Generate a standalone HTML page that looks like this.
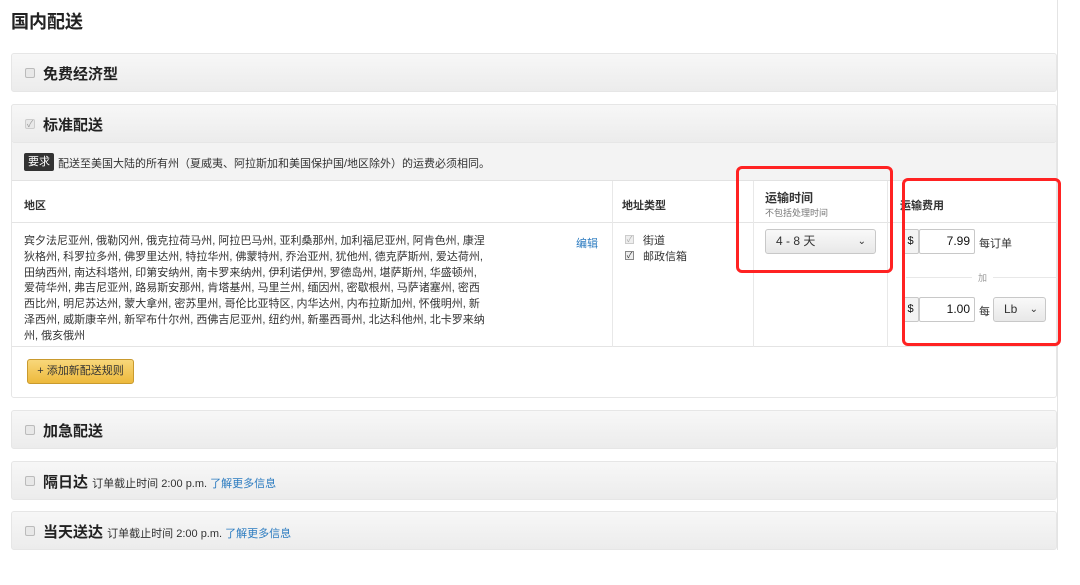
<!DOCTYPE html>
<html><head><meta charset="utf-8"><style>
*{box-sizing:border-box;margin:0;padding:0}
body{width:1080px;height:585px;background:#fff;font-family:"Liberation Sans","Noto Sans CJK SC",sans-serif;color:#111;position:relative;overflow:hidden}
.a{position:absolute}
.ph{position:absolute;left:11px;width:1046px;height:39px;background:linear-gradient(#f7f7f7,#ececec);border:1px solid #e6e6e6;border-radius:3px}
.ph .t{position:absolute;left:31px;top:9px;font-size:15px;font-weight:bold;color:#222}
.cb{position:absolute;left:13px;top:14px;width:10px;height:10px;border:1px solid #bbb;border-radius:2px;background:#e8e8e8}
.sm{font-size:11px;color:#333;font-weight:normal}
.lnk{color:#2b7bc0}
.sel{position:absolute;background:linear-gradient(#f9f9f9,#e8e8e8);border:1px solid #c8c8c8;border-radius:3px;font-size:12px;color:#333}
.inp{position:absolute;border:1px solid #c8c8c8;background:#fff;font-size:12px;border-radius:2px}
.red{position:absolute;border:3px solid #f22;border-radius:6px}
</style></head><body>
<div class="a" style="left:11px;top:8px;font-size:18px;font-weight:bold;color:#222">国内配送</div>
<div class="a" style="left:1057px;top:0;width:1px;height:550px;background:#e4e4e4"></div>

<div class="ph" style="top:53px"><div class="cb"></div><div class="t">免费经济型</div></div>

<div class="a" style="left:11px;top:104px;width:1046px;height:294px;border:1px solid #e6e6e6;border-radius:3px"></div>
<div class="ph" style="top:104px"><div class="cb" style="border-color:#ccc;font-size:9px;line-height:8px;color:#999;text-align:center">✓</div><div class="t">标准配送</div></div>
<div class="a" style="left:12px;top:143px;width:1044px;height:38px;background:#f3f3f3;border-bottom:1px solid #e2e2e2"></div>
<div class="a" style="left:24px;top:153px;width:30px;height:18px;background:#333;color:#fff;font-size:11px;line-height:18px;text-align:center;border-radius:2px">要求</div>
<div class="a" style="left:58px;top:155px;font-size:11px;color:#333">配送至美国大陆的所有州（夏威夷、阿拉斯加和美国保护国/地区除外）的运费必须相同。</div>

<div class="a" style="left:12px;top:222px;width:1044px;height:1px;background:#e4e4e4"></div>
<div class="a" style="left:12px;top:346px;width:1044px;height:1px;background:#e4e4e4"></div>
<div class="a" style="left:612px;top:181px;width:1px;height:166px;background:#e8e8e8"></div>
<div class="a" style="left:753px;top:181px;width:1px;height:166px;background:#e8e8e8"></div>
<div class="a" style="left:887px;top:181px;width:1px;height:166px;background:#e8e8e8"></div>

<div class="a" style="left:24px;top:197px;font-size:11px;font-weight:bold;color:#333">地区</div>
<div class="a" style="left:622px;top:197px;font-size:11px;font-weight:bold;color:#333">地址类型</div>
<div class="a" style="left:765px;top:189px;font-size:12px;font-weight:bold;color:#333">运输时间</div>
<div class="a" style="left:765px;top:206px;font-size:9px;color:#777">不包括处理时间</div>
<div class="a" style="left:900px;top:197px;font-size:11px;font-weight:bold;color:#333">运输费用</div>

<div class="a" style="left:24px;top:234px;width:464px;font-size:11px;line-height:15.8px;color:#333">宾夕法尼亚州, 俄勒冈州, 俄克拉荷马州, 阿拉巴马州, 亚利桑那州, 加利福尼亚州, 阿肯色州, 康涅<br>狄格州, 科罗拉多州, 佛罗里达州, 特拉华州, 佛蒙特州, 乔治亚州, 犹他州, 德克萨斯州, 爱达荷州,<br>田纳西州, 南达科塔州, 印第安纳州, 南卡罗来纳州, 伊利诺伊州, 罗德岛州, 堪萨斯州, 华盛顿州,<br>爱荷华州, 弗吉尼亚州, 路易斯安那州, 肯塔基州, 马里兰州, 缅因州, 密歇根州, 马萨诸塞州, 密西<br>西比州, 明尼苏达州, 蒙大拿州, 密苏里州, 哥伦比亚特区, 内华达州, 内布拉斯加州, 怀俄明州, 新<br>泽西州, 威斯康辛州, 新罕布什尔州, 西佛吉尼亚州, 纽约州, 新墨西哥州, 北达科他州, 北卡罗来纳<br>州, 俄亥俄州</div>
<div class="a lnk" style="left:576px;top:235px;font-size:11px">编辑</div>

<div class="a" style="left:625px;top:235px;width:9px;height:9px;border:1px solid #ccc;background:#eee;font-size:8px;line-height:7px;color:#aaa;text-align:center">✓</div>
<div class="a" style="left:643px;top:232px;font-size:11px;color:#333">街道</div>
<div class="a" style="left:625px;top:251px;width:9px;height:9px;border:1px solid #888;background:#eee;font-size:8px;line-height:7px;color:#333;text-align:center">✓</div>
<div class="a" style="left:643px;top:248px;font-size:11px;color:#333">邮政信箱</div>

<div class="sel" style="left:765px;top:229px;width:111px;height:25px;line-height:23px;padding-left:10px">4 - 8 天<span style="position:absolute;right:9px;top:0;font-size:10px">⌄</span></div>

<div class="inp" style="left:902px;top:229px;width:17px;height:25px;background:#f3f3f3;line-height:23px;text-align:center;font-size:11px">$</div>
<div class="inp" style="left:919px;top:229px;width:56px;height:25px;line-height:23px;text-align:right;padding-right:4px">7.99</div>
<div class="a" style="left:979px;top:235px;font-size:11px;color:#333">每订单</div>
<div class="a" style="left:906px;top:277px;width:150px;height:1px;background:#e8e8e8"></div>
<div class="a" style="left:972px;top:271px;padding:0 6px;background:#fff;font-size:9px;color:#999">加</div>
<div class="inp" style="left:902px;top:297px;width:17px;height:25px;background:#f3f3f3;line-height:23px;text-align:center;font-size:11px">$</div>
<div class="inp" style="left:919px;top:297px;width:56px;height:25px;line-height:23px;text-align:right;padding-right:4px">1.00</div>
<div class="a" style="left:979px;top:303px;font-size:11px;color:#333">每</div>
<div class="sel" style="left:993px;top:297px;width:53px;height:25px;line-height:23px;padding-left:10px">Lb<span style="position:absolute;right:7px;top:0;font-size:10px">⌄</span></div>

<div class="a" style="left:27px;top:359px;width:107px;height:25px;background:linear-gradient(#f8d77a,#edb93c);border:1px solid #c99a2e;border-radius:3px;font-size:11px;line-height:23px;text-align:center;color:#333">+ 添加新配送规则</div>

<div class="red" style="left:736px;top:166px;width:157px;height:107px"></div>
<div class="red" style="left:902px;top:178px;width:159px;height:168px"></div>

<div class="ph" style="top:410px"><div class="cb"></div><div class="t">加急配送</div></div>
<div class="ph" style="top:461px"><div class="cb"></div><div class="t">隔日达 <span class="sm">订单截止时间 2:00 p.m. <span class="lnk">了解更多信息</span></span></div></div>
<div class="ph" style="top:511px"><div class="cb"></div><div class="t">当天送达 <span class="sm">订单截止时间 2:00 p.m. <span class="lnk">了解更多信息</span></span></div></div>
</body></html>
